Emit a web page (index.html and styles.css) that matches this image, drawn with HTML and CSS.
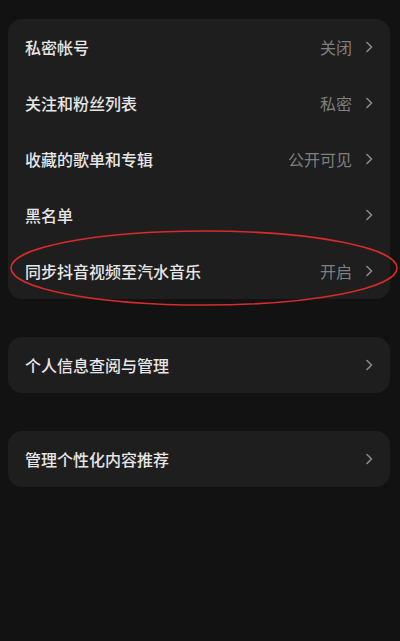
FILE: index.html
```html
<!DOCTYPE html>
<html lang="zh-CN">
<head>
<meta charset="utf-8">
<link rel="stylesheet" href="styles.css">
</head>
<body>
<div class="page">
  <div class="card">
    <div class="row"><span class="label">私密帐号</span><span class="value">关闭</span><svg class="chev" viewBox="0 0 8 12"><path d="M2 1.5 L6.5 6 L2 10.5"/></svg></div>
    <div class="row"><span class="label">关注和粉丝列表</span><span class="value">私密</span><svg class="chev" viewBox="0 0 8 12"><path d="M2 1.5 L6.5 6 L2 10.5"/></svg></div>
    <div class="row"><span class="label">收藏的歌单和专辑</span><span class="value">公开可见</span><svg class="chev" viewBox="0 0 8 12"><path d="M2 1.5 L6.5 6 L2 10.5"/></svg></div>
    <div class="row"><span class="label">黑名单</span><span class="value"></span><svg class="chev" viewBox="0 0 8 12"><path d="M2 1.5 L6.5 6 L2 10.5"/></svg></div>
    <div class="row"><span class="label">同步抖音视频至汽水音乐</span><span class="value">开启</span><svg class="chev" viewBox="0 0 8 12"><path d="M2 1.5 L6.5 6 L2 10.5"/></svg></div>
  </div>
  <div class="card">
    <div class="row"><span class="label">个人信息查阅与管理</span><span class="value"></span><svg class="chev" viewBox="0 0 8 12"><path d="M2 1.5 L6.5 6 L2 10.5"/></svg></div>
  </div>
  <div class="card">
    <div class="row"><span class="label">管理个性化内容推荐</span><span class="value"></span><svg class="chev" viewBox="0 0 8 12"><path d="M2 1.5 L6.5 6 L2 10.5"/></svg></div>
  </div>
  <svg class="mark" viewBox="0 0 400 100" width="400" height="100"><ellipse cx="204" cy="48" rx="193" ry="37" fill="none" stroke="#d92b2b" stroke-width="1.6"/></svg>
</div>
</body>
</html>
```
FILE: styles.css
```css
html, body {
  margin: 0;
  padding: 0;
  background: #121212;
}
body {
  width: 400px;
  height: 641px;
  font-family: "Noto Sans CJK SC", "Noto Sans", sans-serif;
}
.page {
  position: relative;
  padding: 19px 10px 0 8px;
  display: flex;
  flex-direction: column;
  gap: 38px;
}
.card {
  background: #1e1e1e;
  border-radius: 14px;
}
.row {
  height: 56px;
  display: flex;
  align-items: center;
  padding: 0 17px 0 17px;
}
.label {
  flex: 1;
  color: #e6e6e6;
  font-size: 16px;
  font-weight: 500;
}
.value {
  color: #7f7f7f;
  font-size: 16px;
  margin-right: 13px;
}
.chev {
  width: 8px;
  height: 12px;
  fill: none;
  stroke: #8a8a8a;
  stroke-width: 1.6;
  stroke-linecap: round;
  stroke-linejoin: round;
}
.mark {
  position: absolute;
  left: 0;
  top: 220px;
}
```
